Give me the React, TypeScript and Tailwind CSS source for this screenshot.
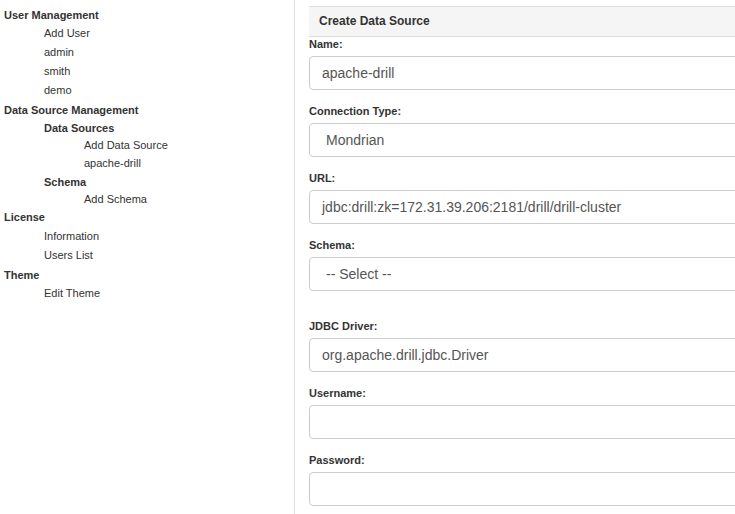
import React from "react";

// mt = space above each 17px row, taken from the reference row centres
type NavRow = { label: string; level: 0 | 1 | 2; bold?: boolean; mt: string };

const navRows: NavRow[] = [
  { label: "User Management", level: 0, bold: true, mt: "mt-0" },
  { label: "Add User", level: 1, mt: "mt-[1px]" },
  { label: "admin", level: 1, mt: "mt-[2px]" },
  { label: "smith", level: 1, mt: "mt-[2px]" },
  { label: "demo", level: 1, mt: "mt-[2px]" },
  { label: "Data Source Management", level: 0, bold: true, mt: "mt-[3px]" },
  { label: "Data Sources", level: 1, bold: true, mt: "mt-[1px]" },
  { label: "Add Data Source", level: 2, mt: "mt-0" },
  { label: "apache-drill", level: 2, mt: "mt-[1px]" },
  { label: "Schema", level: 1, bold: true, mt: "mt-[2px]" },
  { label: "Add Schema", level: 2, mt: "mt-0" },
  { label: "License", level: 0, bold: true, mt: "mt-[1px]" },
  { label: "Information", level: 1, mt: "mt-[2px]" },
  { label: "Users List", level: 1, mt: "mt-[2px]" },
  { label: "Theme", level: 0, bold: true, mt: "mt-[3px]" },
  { label: "Edit Theme", level: 1, mt: "mt-[1px]" },
];

const indent = ["pl-[4px]", "pl-[44px]", "pl-[84px]"];

const Field = ({
  label,
  value,
  select,
  extraTop,
}: {
  label: string;
  value?: string;
  select?: boolean;
  extraTop?: boolean;
}) => (
  <div className={extraTop ? "mt-[28px]" : "mt-[14px] first:mt-0"}>
    <div className="h-[14px] flex items-center text-[11px] font-bold text-[#333]">
      {label}
    </div>
    <div
      className={`mt-[5px] h-[34px] w-[480px] flex items-center rounded-[4px] border border-[#ccc] bg-white text-[14px] text-[#555] ${
        select ? "pl-[16px]" : "pl-[12px]"
      }`}
    >
      {value}
    </div>
  </div>
);

export default function App() {
  return (
    <div
      className="flex w-[735px] h-[514px] overflow-hidden bg-white"
      style={{ fontFamily: '"Liberation Sans", Arial, sans-serif' }}
    >
      <div className="w-[295px] shrink-0 border-r border-[#ddd] pt-[7px]">
        {navRows.map((r) => (
          <div
            key={r.label}
            className={`h-[17px] flex items-center text-[11px] text-[#333] ${r.mt} ${indent[r.level]} ${
              r.bold ? "font-bold" : ""
            }`}
          >
            {r.label}
          </div>
        ))}
      </div>

      <div className="flex-1 min-w-0 pl-[14px] pt-[6px]">
        <div className="w-[480px] h-[31px] flex items-center pl-[10px] pb-[1px] border-t border-b border-[#ddd] bg-[#f5f5f5] text-[12px] font-bold text-[#333]">
          Create Data Source
        </div>
        <div>
          <Field label="Name:" value="apache-drill" />
          <Field label="Connection Type:" value="Mondrian" select />
          <Field label="URL:" value="jdbc:drill:zk=172.31.39.206:2181/drill/drill-cluster" />
          <Field label="Schema:" value="-- Select --" select />
          <Field label="JDBC Driver:" value="org.apache.drill.jdbc.Driver" extraTop />
          <Field label="Username:" />
          <Field label="Password:" />
        </div>
      </div>
    </div>
  );
}
